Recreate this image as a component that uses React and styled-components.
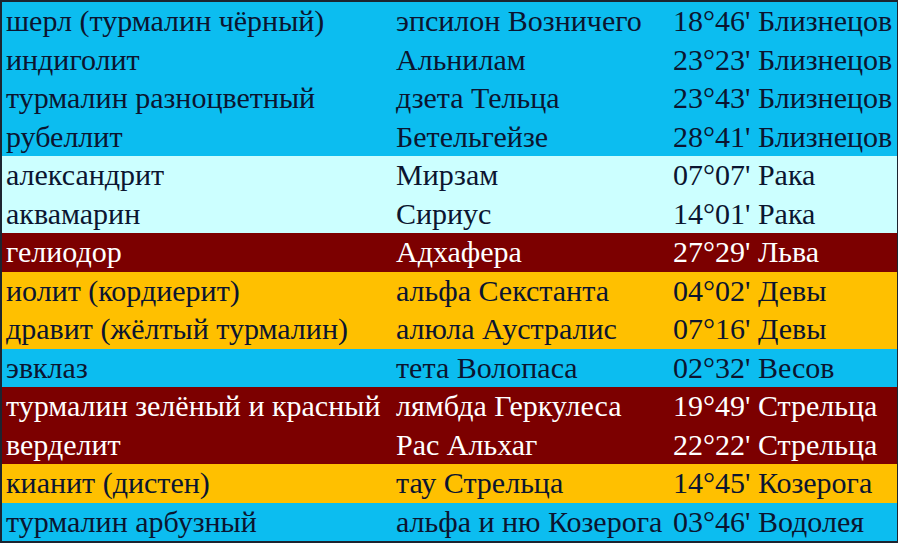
import React from "react";
import styled, { createGlobalStyle } from "styled-components";

const Global = createGlobalStyle`
  html, body { margin: 0; padding: 0; background: #fff; }
`;

const palette = {
  blue: { bg: "#0cbdf0", fg: "#0b1530" },
  light: { bg: "#ccffff", fg: "#0b1530" },
  maroon: { bg: "#7c0000", fg: "#ffffff" },
  yellow: { bg: "#ffc000", fg: "#0b1530" },
};

const Table = styled.div`
  box-sizing: border-box;
  width: 898px;
  height: 543px;
  border: 2px solid #1c2430;
  border-right-width: 1px;
  display: flex;
  flex-direction: column;
`;

const Row = styled.div`
  flex: 1;
  display: grid;
  grid-template-columns: 390px 277px 1fr;
  align-items: center;
  background: ${(p) => palette[p.$tone].bg};
  color: ${(p) => palette[p.$tone].fg};
`;

const Cell = styled.div`
  font-family: 'Liberation Serif', 'Times New Roman', serif;
  font-size: 30px;
  padding-left: 4px;
  white-space: nowrap;
  line-height: 1;
`;

const rows = [
  ["шерл (турмалин чёрный)", "эпсилон Возничего", "18°46' Близнецов", "blue"],
  ["индиголит", "Альнилам", "23°23' Близнецов", "blue"],
  ["турмалин разноцветный", "дзета Тельца", "23°43' Близнецов", "blue"],
  ["рубеллит", "Бетельгейзе", "28°41' Близнецов", "blue"],
  ["александрит", "Мирзам", "07°07' Рака", "light"],
  ["аквамарин", "Сириус", "14°01' Рака", "light"],
  ["гелиодор", "Адхафера", "27°29' Льва", "maroon"],
  ["иолит (кордиерит)", "альфа Секстанта", "04°02' Девы", "yellow"],
  ["дравит (жёлтый турмалин)", "алюла Аустралис", "07°16' Девы", "yellow"],
  ["эвклаз", "тета Волопаса", "02°32' Весов", "blue"],
  ["турмалин зелёный и красный", "лямбда Геркулеса", "19°49' Стрельца", "maroon"],
  ["верделит", "Рас Альхаг", "22°22' Стрельца", "maroon"],
  ["кианит (дистен)", "тау Стрельца", "14°45' Козерога", "yellow"],
  ["турмалин арбузный", "альфа и ню Козерога", "03°46' Водолея", "blue"],
];

export default function App() {
  return (
    <>
      <Global />
      <Table>
        {rows.map(([a, b, c, tone], i) => (
          <Row key={i} $tone={tone}>
            <Cell>{a}</Cell>
            <Cell>{b}</Cell>
            <Cell>{c}</Cell>
          </Row>
        ))}
      </Table>
    </>
  );
}
